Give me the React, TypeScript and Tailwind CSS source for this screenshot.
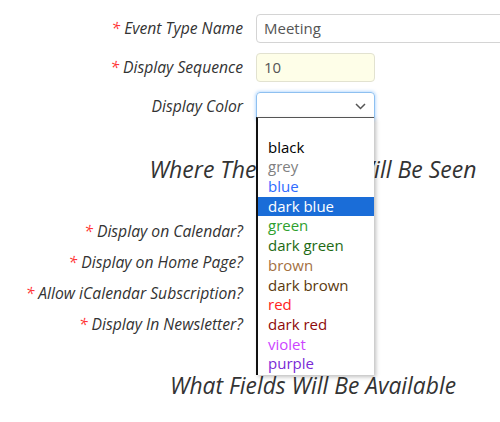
import React from "react";

const font = { fontFamily: '"Open Sans", "Noto Sans", sans-serif' };

function Label({ text, req }: { text: string; req?: boolean }) {
  return (
    <div className="w-[243px] shrink-0 text-right italic text-[15.7px] text-[#333] whitespace-nowrap">
      {req && <span className="text-[#ff3333] mr-[4px]">*</span>}
      {text}
    </div>
  );
}

const options: { t: string; c: string; sel?: boolean }[] = [
  { t: "", c: "#000" },
  { t: "black", c: "#000000" },
  { t: "grey", c: "#808080" },
  { t: "blue", c: "#2f6bff" },
  { t: "dark blue", c: "#ffffff", sel: true },
  { t: "green", c: "#2ea02e" },
  { t: "dark green", c: "#1e6a14" },
  { t: "brown", c: "#a3703f" },
  { t: "dark brown", c: "#5a3a0e" },
  { t: "red", c: "#ff2222" },
  { t: "dark red", c: "#8e0a0a" },
  { t: "violet", c: "#cc44ff" },
  { t: "purple", c: "#7a2ad6" },
];

export default function App() {
  return (
    <div className="w-[500px] h-[422px] overflow-hidden bg-white" style={font}>
      <div className="w-[626px] pt-[14px] relative">
        <div className="flex flex-col gap-[10px]">
          <div className="flex items-center gap-[13px] h-[29px]">
            <Label text="Event Type Name" req />
            <div className="w-[340px] h-[29px] border border-[#d4d4d4] rounded-[4px] px-[7px] flex items-center text-[15px] text-[#555]">
              Meeting
            </div>
          </div>
          <div className="flex items-center gap-[13px] h-[29px]">
            <Label text="Display Sequence" req />
            <div className="w-[119px] h-[29px] border border-[#e2e2d0] bg-[#fefee8] rounded-[4px] px-[7px] flex items-center text-[15px] text-[#555]">
              10
            </div>
          </div>
          <div className="flex items-center gap-[13px] h-[29px]">
            <Label text="Display Color" />
            <div className="relative w-[119px] h-[29px] border border-[#8ec0f0] rounded-[4px] shadow-[0_0_3px_1px_rgba(128,189,255,0.5)] flex items-center justify-end pr-[8px]">
              <svg width="11" height="7" viewBox="0 0 11 7" fill="none">
                <path d="M1 1l4.5 4.5L10 1" stroke="#555" strokeWidth="1.5" />
              </svg>
            </div>
          </div>
        </div>

        <div className="mt-[34px] text-center italic text-[23px] text-[#333] leading-[28px] whitespace-nowrap">
          Where These Events Will Be Seen
        </div>

        <div className="mt-[38px] flex flex-col gap-[10px]">
          <div className="flex items-center h-[21px]">
            <Label text="Display on Calendar?" req />
          </div>
          <div className="flex items-center h-[21px]">
            <Label text="Display on Home Page?" req />
          </div>
          <div className="flex items-center h-[21px]">
            <Label text="Allow iCalendar Subscription?" req />
          </div>
          <div className="flex items-center h-[21px]">
            <Label text="Display In Newsletter?" req />
          </div>
        </div>

        <div className="mt-[37px] text-center italic text-[22.8px] text-[#333] leading-[28px] whitespace-nowrap">
          What Fields Will Be Available
        </div>

        <div className="absolute left-[256px] top-[117px] w-[118px] h-[258px] bg-white border-t border-t-[#555] border-l-2 border-l-[#111] shadow-[2px_2px_4px_rgba(0,0,0,0.25)] flex flex-col">
          {options.map((o, i) => (
            <div
              key={i}
              className={`h-[19.7px] leading-[19.7px] pl-[10px] text-[15px] whitespace-nowrap ${o.sel ? "bg-[#1a6dd8]" : ""}`}
              style={{ color: o.c }}
            >
              {o.t}
            </div>
          ))}
        </div>
      </div>
    </div>
  );
}
